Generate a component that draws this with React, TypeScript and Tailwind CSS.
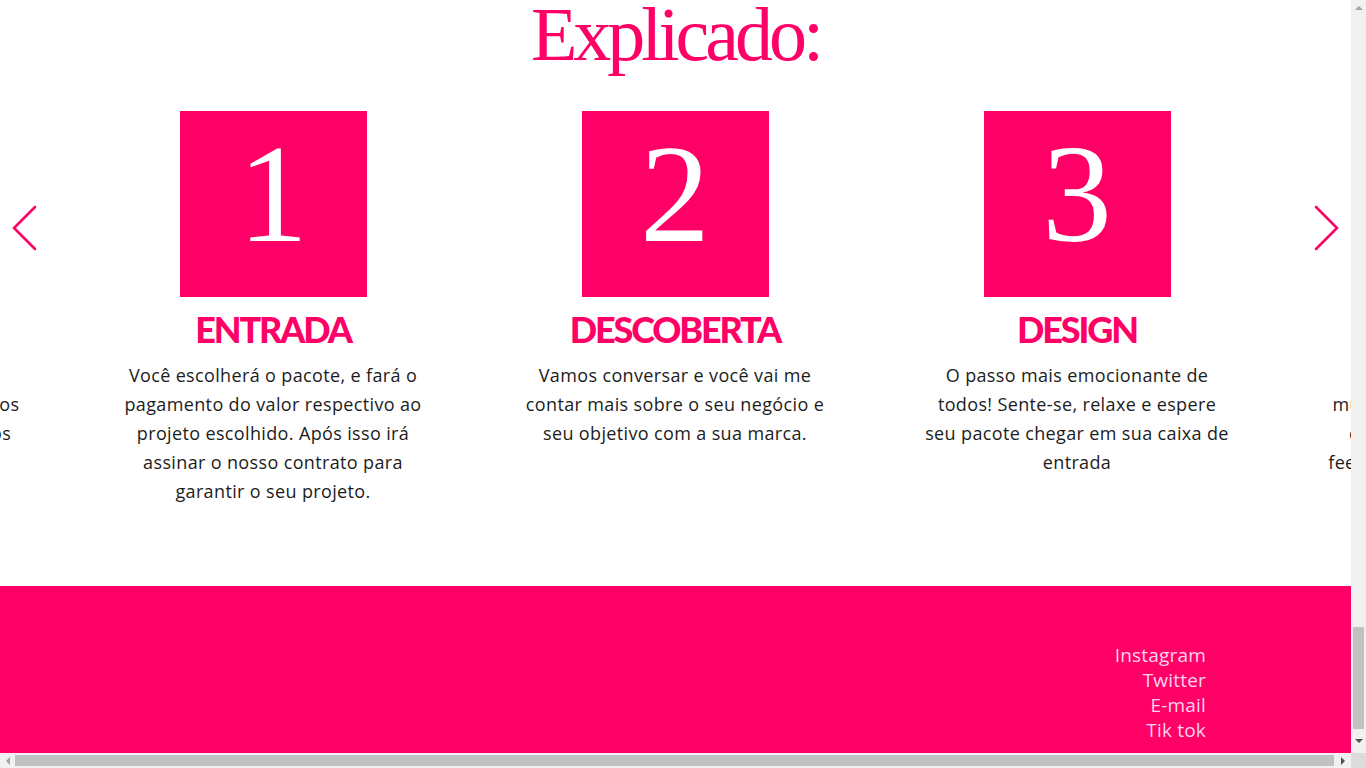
const steps = [
  {
    n: '5',
    title: 'ENTREGA',
    lines: ['Com o projeto aprovado,', 'você já receberá arquivos prontos', 'para usar em todos os produtos', 'e redes sociais.'],
  },
  {
    n: '1',
    title: 'ENTRADA',
    lines: [
      'Você escolherá o pacote, e fará o',
      'pagamento do valor respectivo ao',
      'projeto escolhido. Após isso irá',
      'assinar o nosso contrato para',
      'garantir o seu projeto.',
    ],
  },
  {
    n: '2',
    title: 'DESCOBERTA',
    lines: ['Vamos conversar e você vai me', 'contar mais sobre o seu negócio e', 'seu objetivo com a sua marca.'],
  },
  {
    n: '3',
    title: 'DESIGN',
    lines: ['O passo mais emocionante de', 'todos! Sente-se, relaxe e espere', 'seu pacote chegar em sua caixa de', 'entrada'],
  },
  {
    n: '4',
    title: 'REVISÃO',
    lines: ['Agora é a sua vez de', 'muitas coisas sobre o seu projeto', 'com calma, para que com seu', 'feedback façamos os ajustes finais'],
  },
]

const Chevron = ({ dir }: { dir: 'left' | 'right' }) => (
  <svg width="26" height="46" viewBox="0 0 26 46" fill="none">
    <path
      d={dir === 'left' ? 'M24 2 L3 23 L24 44' : 'M2 2 L23 23 L2 44'}
      stroke="#ff0066"
      strokeWidth="2.6"
      strokeLinecap="round"
    />
  </svg>
)

const Step = ({ n, title, lines }: { n: string; title: string; lines: string[] }) => (
  <div className="flex w-[402px] shrink-0 flex-col items-center">
    <div className="flex h-[186px] w-[187px] items-center justify-center bg-[#ff0066] pb-[20px]">
      <span className="font-['Liberation_Serif',serif] text-[140px] leading-none text-white">{n}</span>
    </div>
    <h3 className="mt-[14px] font-['Lato',sans-serif] text-[36px] font-black leading-none tracking-[-0.06em] text-[#ff0066]">
      {title}
    </h3>
    <p className="mt-[14px] flex flex-col items-center font-['Open_Sans',sans-serif] text-[18px] leading-[29px] tracking-[0.02em] text-[#1c1c1c]">
      {lines.map((l) => (
        <span key={l} className="whitespace-nowrap">
          {l}
        </span>
      ))}
    </p>
  </div>
)

export default function App() {
  return (
    <div className="flex h-screen w-full flex-col overflow-hidden bg-white">
      <div className="flex min-h-0 flex-1">
        <div className="flex min-w-0 flex-1 flex-col overflow-hidden">
          <section className="relative h-[586px] shrink-0 overflow-hidden">
            <h2 className="mt-[-4px] text-center font-['Liberation_Serif',serif] text-[76px] leading-none tracking-[-4px] text-[#ff0066]">
              Explicado:
            </h2>
            <div className="ml-[-330px] mt-[39px] flex">
              {steps.map((s) => (
                <Step key={s.n} {...s} />
              ))}
            </div>
            <button className="absolute left-[11px] top-[205px]">
              <Chevron dir="left" />
            </button>
            <button className="absolute left-[1314px] top-[205px]">
              <Chevron dir="right" />
            </button>
          </section>
          <footer className="flex flex-1 flex-col items-end bg-[#ff0066] pr-[145px] pt-[57px] font-['Open_Sans',sans-serif] text-[19px] leading-[25px] tracking-[0.01em] text-[#ffd4ee]">
            <a>Instagram</a>
            <a>Twitter</a>
            <a>E-mail</a>
            <a>Tik tok</a>
          </footer>
        </div>
        <div className="flex w-[15px] flex-col items-center bg-[#f1f1f1]">
          <div className="flex h-[15px] items-center justify-center">
            <div className="h-0 w-0 border-x-[4px] border-b-[4px] border-x-transparent border-b-[#a3a3a3]" />
          </div>
          <div className="flex-1" />
          <div className="h-[102px] w-[11px] bg-[#c1c1c1]" />
          <div className="flex h-[24px] items-center justify-center">
            <div className="h-0 w-0 border-x-[4px] border-t-[4px] border-x-transparent border-t-[#505050]" />
          </div>
        </div>
      </div>
      <div className="flex h-[15px] shrink-0">
        <div className="flex flex-1 items-center bg-[#f1f1f1]">
          <div className="flex w-[15px] items-center justify-center">
            <div className="h-0 w-0 border-y-[4px] border-r-[4px] border-y-transparent border-r-[#a3a3a3]" />
          </div>
          <div className="h-[11px] flex-1 bg-[#c1c1c1]" />
          <div className="flex w-[17px] items-center justify-center">
            <div className="h-0 w-0 border-y-[4px] border-l-[4px] border-y-transparent border-l-[#505050]" />
          </div>
        </div>
        <div className="w-[15px] bg-[#dcdcdc]" />
      </div>
    </div>
  )
}
